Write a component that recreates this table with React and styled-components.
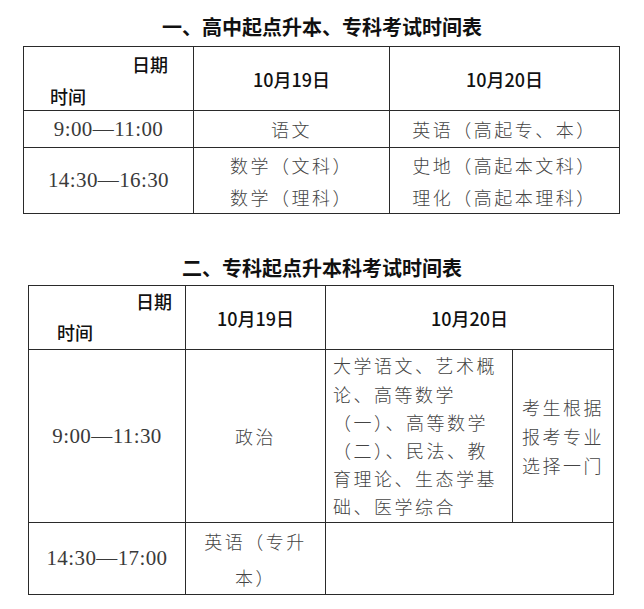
import React from "react";
import styled, { createGlobalStyle } from "styled-components";

const GlobalStyle = createGlobalStyle`
  html, body {
    margin: 0;
    padding: 0;
    background: #ffffff;
  }
  body {
    font-family: "Noto Sans CJK SC", "Noto Sans", sans-serif;
    color: #000;
  }
`;

const Page = styled.div`
  width: 644px;
  display: flex;
  flex-direction: column;
  align-items: flex-start;
`;

const Title = styled.h2`
  align-self: stretch;
  margin: ${(p) => p.$top}px 0 ${(p) => p.$bottom}px 0;
  padding: 0;
  font-family: "Noto Sans CJK SC", sans-serif;
  font-size: 20px;
  font-weight: 700;
  line-height: 26px;
  text-align: center;
  color: #111;
`;

const Grid = styled.div`
  display: grid;
  grid-template-columns: ${(p) => p.$cols};
  grid-template-rows: ${(p) => p.$rows};
  margin-left: ${(p) => p.$left}px;
  border-left: 1px solid #2a2a2a;
  border-top: 1px solid #2a2a2a;
`;

const Cell = styled.div`
  box-sizing: border-box;
  border-right: 1px solid #2a2a2a;
  border-bottom: 1px solid #2a2a2a;
  grid-column: span ${(p) => p.$span || 1};
  display: flex;
  flex-direction: column;
  align-items: center;
  justify-content: center;
  text-align: center;
`;

const HeadCell = styled(Cell)`
  font-family: "Noto Sans CJK SC", sans-serif;
  font-size: 18px;
  font-weight: 500;
  color: #111;
`;

const CornerCell = styled(Cell)`
  align-items: stretch;
  justify-content: flex-start;
  padding: ${(p) => p.$pad};
  font-family: "Noto Sans CJK SC", sans-serif;
  font-size: 18px;
  font-weight: 500;
  line-height: ${(p) => p.$lh}px;
  color: #111;
`;

const CornerLine = styled.span`
  display: block;
  text-align: ${(p) => p.$align};
`;

const TimeCell = styled(Cell)`
  font-family: "Liberation Serif", "Noto Sans CJK SC", serif;
  font-size: 21px;
  letter-spacing: 0.4px;
  color: #3a3a3a;
`;

const TextCell = styled(Cell)`
  font-family: "Noto Sans CJK SC", sans-serif;
  font-size: 18px;
  font-weight: 300;
  letter-spacing: 2.5px;
  line-height: ${(p) => p.$lh || 32}px;
  color: #444;
  align-items: ${(p) => (p.$left ? "flex-start" : "center")};
  text-align: ${(p) => (p.$left ? "left" : "center")};
  padding-left: ${(p) => p.$padLeft || 0}px;
`;

const Line = styled.span`
  display: block;
  white-space: nowrap;
`;

const Lines = ({ items }) =>
  items.map((t, i) => <Line key={i}>{t}</Line>);

export default function App() {
  return (
    <>
      <GlobalStyle />
      <Page>
        <Title $top={14} $bottom={6}>
          一、高中起点升本、专科考试时间表
        </Title>
        <Grid $left={23} $cols="170px 196px 230px" $rows="64px 37px 66px">
          <CornerCell $pad="1px 25px 0 26px" $lh={32}>
            <CornerLine $align="right">日期</CornerLine>
            <CornerLine $align="left">时间</CornerLine>
          </CornerCell>
          <HeadCell>10月19日</HeadCell>
          <HeadCell>10月20日</HeadCell>

          <TimeCell>9:00—11:00</TimeCell>
          <TextCell>语文</TextCell>
          <TextCell>英语（高起专、本）</TextCell>

          <TimeCell>14:30—16:30</TimeCell>
          <TextCell $lh={32}>
            <Lines items={["数学（文科）", "数学（理科）"]} />
          </TextCell>
          <TextCell $lh={32}>
            <Lines items={["史地（高起本文科）", "理化（高起本理科）"]} />
          </TextCell>
        </Grid>

        <Title $top={41} $bottom={4}>
          二、专科起点升本科考试时间表
        </Title>
        <Grid
          $left={28}
          $cols="157px 140px 187px 101px"
          $rows="64px 173px 72px"
        >
          <CornerCell $pad="0 13px 0 28px" $lh={31}>
            <CornerLine $align="right">日期</CornerLine>
            <CornerLine $align="left">时间</CornerLine>
          </CornerCell>
          <HeadCell>10月19日</HeadCell>
          <HeadCell $span={2}>10月20日</HeadCell>

          <TimeCell>9:00—11:30</TimeCell>
          <TextCell>政治</TextCell>
          <TextCell $left $padLeft={7} $lh={28.2}>
            <Lines
              items={[
                "大学语文、艺术概",
                "论、高等数学",
                "（一）、高等数学",
                "（二）、民法、教",
                "育理论、生态学基",
                "础、医学综合",
              ]}
            />
          </TextCell>
          <TextCell $lh={29}>
            <Lines items={["考生根据", "报考专业", "选择一门"]} />
          </TextCell>

          <TimeCell>14:30—17:00</TimeCell>
          <TextCell $lh={36}>
            <Lines items={["英语（专升", "本）"]} />
          </TextCell>
          <Cell $span={2} />
        </Grid>
      </Page>
    </>
  );
}
